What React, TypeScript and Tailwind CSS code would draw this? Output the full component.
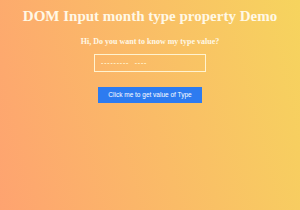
import React from "react";

export default function App() {
  return (
    <div className="w-[300px] h-[210px] overflow-hidden bg-[linear-gradient(75deg,#fea370,#f6d45e)] flex flex-col items-center font-['Liberation_Serif',serif] text-[#fff8e6]">
      <h1 className="mt-[6px] text-[15px] leading-[20px] font-bold">DOM Input month type property Demo</h1>
      <h3 className="mt-[10px] text-[8px] leading-[12px] font-bold">Hi, Do you want to know my type value?</h3>
      <div className="mt-[6px] w-[112px] h-[18px] border border-[#fff3d0] flex items-center pl-[6px] font-['Liberation_Sans',sans-serif] text-[7px] font-bold tracking-[0.8px] text-[#fff0c8]">
        ---------&nbsp; ----
      </div>
      <button className="mt-[15px] w-[104px] h-[16px] bg-[#2d7bf0] text-white text-[6.5px] font-['Liberation_Sans',sans-serif] flex items-center justify-center">
        Click me to get value of Type
      </button>
    </div>
  );
}
